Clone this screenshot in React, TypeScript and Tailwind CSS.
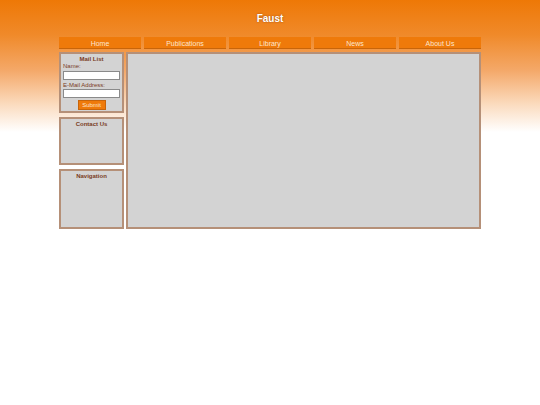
import React from "react";

function SidePanel({ title, children, h }: { title: string; children?: React.ReactNode; h: string }) {
  return (
    <div className={`border-2 border-[#b59078] bg-[#d3d3d3] px-[1px] pt-[1px] ${h}`}>
      <h3 className="text-center text-[6px] font-bold leading-[8px] text-[#7a3c1e]">{title}</h3>
      {children}
    </div>
  );
}

export default function App() {
  const links = ["Home", "Publications", "Library", "News", "About Us"];

  return (
    <div
      className="min-h-[405px] w-full bg-[linear-gradient(to_bottom,#ee7806_0px,#f08a2a_35px,#f4a868_70px,#fbdcc0_105px,#ffffff_132px)] pt-[13px]"
      style={{ fontFamily: '"Liberation Sans", Arial, sans-serif' }}
    >
      <div className="mx-auto w-[422px]">
        <h1 className="text-center text-[10px] font-bold leading-[12px] text-white [text-shadow:0_0_2px_rgba(120,50,0,0.7)]">
          Faust
        </h1>

        <nav className="mt-[12px] flex gap-[3px]">
          {links.map((l) => (
            <a
              key={l}
              href="#"
              className="flex h-[12px] flex-1 items-center justify-center border-b border-[#c8650a] bg-[#ef7a0a] pt-[1px] text-[7px] leading-none text-[#fde6cf]"
            >
              {l}
            </a>
          ))}
        </nav>

        <div className="mt-[3px] flex gap-[2px]">
          <div className="flex w-[65px] flex-col gap-[4px]">
            <SidePanel title="Mail List" h="h-[61px]">
              <form className="flex flex-col px-[1px]">
                <label className="text-[6px] leading-[7px] text-[#7a3c1e]">Name:</label>
                <input type="text" className="mt-[1px] h-[9px] w-full border border-[#8a8a8a] bg-white" />
                <label className="mt-[2px] text-[6px] leading-[7px] text-[#7a3c1e]">E-Mail Address:</label>
                <input type="text" className="h-[9px] w-full border border-[#8a8a8a] bg-white" />
                <div className="mt-[2px] flex justify-center">
                  <button
                    type="button"
                    className="h-[10px] w-[28px] border border-[#c8650a] bg-[#ef7a0a] text-[6px] leading-none text-[#fde6cf]"
                  >
                    Submit
                  </button>
                </div>
              </form>
            </SidePanel>
            <SidePanel title="Contact Us" h="h-[48px]" />
            <SidePanel title="Navigation" h="h-[60px]" />
          </div>

          <main className="h-[177px] flex-1 border-2 border-[#b59078] bg-[#d3d3d3]" />
        </div>
      </div>
    </div>
  );
}
